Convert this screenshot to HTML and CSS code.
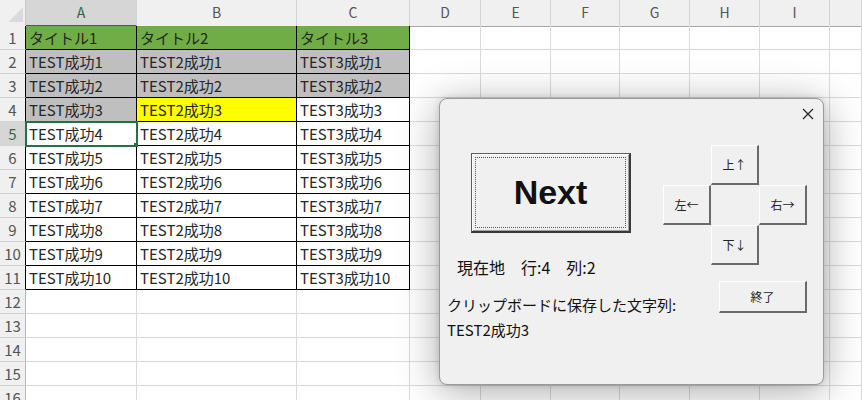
FILE: index.html
```html
<!DOCTYPE html>
<html lang="ja">
<head>
  <meta charset="UTF-8" />
  <title>Sheet1 - カーソル移動</title>
  <link rel="stylesheet" href="styles.css">
</head>
<body>

<div class="sheet">
  <div class="row head">
    <div class="corner"></div>
    <div class="ch sel">A</div><div class="ch">B</div><div class="ch">C</div><div class="ch">D</div><div class="ch">E</div>
    <div class="ch">F</div><div class="ch">G</div><div class="ch">H</div><div class="ch">I</div><div class="ch"></div>
  </div>

  <div class="row">
    <div class="rh edge">1</div>
    <div class="c t green">タイトル1</div><div class="c t green">タイトル2</div><div class="c t green">タイトル3</div>
    <div class="c"></div><div class="c"></div><div class="c"></div><div class="c"></div><div class="c"></div><div class="c"></div><div class="c"></div>
  </div>
  <div class="row">
    <div class="rh edge">2</div>
    <div class="c t gray">TEST成功1</div><div class="c t gray">TEST2成功1</div><div class="c t gray">TEST3成功1</div>
    <div class="c"></div><div class="c"></div><div class="c"></div><div class="c"></div><div class="c"></div><div class="c"></div><div class="c"></div>
  </div>
  <div class="row">
    <div class="rh edge">3</div>
    <div class="c t gray">TEST成功2</div><div class="c t gray">TEST2成功2</div><div class="c t gray">TEST3成功2</div>
    <div class="c"></div><div class="c"></div><div class="c"></div><div class="c"></div><div class="c"></div><div class="c"></div><div class="c"></div>
  </div>
  <div class="row">
    <div class="rh edge">4</div>
    <div class="c t gray">TEST成功3</div><div class="c t yellow">TEST2成功3</div><div class="c t">TEST3成功3</div>
    <div class="c"></div><div class="c"></div><div class="c"></div><div class="c"></div><div class="c"></div><div class="c"></div><div class="c"></div>
  </div>
  <div class="row">
    <div class="rh edge sel">5</div>
    <div class="c t active">TEST成功4</div><div class="c t">TEST2成功4</div><div class="c t">TEST3成功4</div>
    <div class="c"></div><div class="c"></div><div class="c"></div><div class="c"></div><div class="c"></div><div class="c"></div><div class="c"></div>
  </div>
  <div class="row">
    <div class="rh edge">6</div>
    <div class="c t">TEST成功5</div><div class="c t">TEST2成功5</div><div class="c t">TEST3成功5</div>
    <div class="c"></div><div class="c"></div><div class="c"></div><div class="c"></div><div class="c"></div><div class="c"></div><div class="c"></div>
  </div>
  <div class="row">
    <div class="rh edge">7</div>
    <div class="c t">TEST成功6</div><div class="c t">TEST2成功6</div><div class="c t">TEST3成功6</div>
    <div class="c"></div><div class="c"></div><div class="c"></div><div class="c"></div><div class="c"></div><div class="c"></div><div class="c"></div>
  </div>
  <div class="row">
    <div class="rh edge">8</div>
    <div class="c t">TEST成功7</div><div class="c t">TEST2成功7</div><div class="c t">TEST3成功7</div>
    <div class="c"></div><div class="c"></div><div class="c"></div><div class="c"></div><div class="c"></div><div class="c"></div><div class="c"></div>
  </div>
  <div class="row">
    <div class="rh edge">9</div>
    <div class="c t">TEST成功8</div><div class="c t">TEST2成功8</div><div class="c t">TEST3成功8</div>
    <div class="c"></div><div class="c"></div><div class="c"></div><div class="c"></div><div class="c"></div><div class="c"></div><div class="c"></div>
  </div>
  <div class="row">
    <div class="rh edge">10</div>
    <div class="c t">TEST成功9</div><div class="c t">TEST2成功9</div><div class="c t">TEST3成功9</div>
    <div class="c"></div><div class="c"></div><div class="c"></div><div class="c"></div><div class="c"></div><div class="c"></div><div class="c"></div>
  </div>
  <div class="row">
    <div class="rh edge">11</div>
    <div class="c t">TEST成功10</div><div class="c t">TEST2成功10</div><div class="c t">TEST3成功10</div>
    <div class="c"></div><div class="c"></div><div class="c"></div><div class="c"></div><div class="c"></div><div class="c"></div><div class="c"></div>
  </div>
  <div class="row">
    <div class="rh">12</div>
    <div class="c"></div><div class="c"></div><div class="c"></div><div class="c"></div><div class="c"></div><div class="c"></div><div class="c"></div><div class="c"></div><div class="c"></div><div class="c"></div>
  </div>
  <div class="row">
    <div class="rh">13</div>
    <div class="c"></div><div class="c"></div><div class="c"></div><div class="c"></div><div class="c"></div><div class="c"></div><div class="c"></div><div class="c"></div><div class="c"></div><div class="c"></div>
  </div>
  <div class="row">
    <div class="rh">14</div>
    <div class="c"></div><div class="c"></div><div class="c"></div><div class="c"></div><div class="c"></div><div class="c"></div><div class="c"></div><div class="c"></div><div class="c"></div><div class="c"></div>
  </div>
  <div class="row">
    <div class="rh">15</div>
    <div class="c"></div><div class="c"></div><div class="c"></div><div class="c"></div><div class="c"></div><div class="c"></div><div class="c"></div><div class="c"></div><div class="c"></div><div class="c"></div>
  </div>
  <div class="row">
    <div class="rh">16</div>
    <div class="c"></div><div class="c"></div><div class="c"></div><div class="c"></div><div class="c"></div><div class="c"></div><div class="c"></div><div class="c"></div><div class="c"></div><div class="c"></div>
  </div>
</div>

<!-- UserForm -->
<div class="form">
  <div class="form-title">
    <span class="close-btn">
      <svg width="12" height="12" viewBox="0 0 12 12"><path d="M1 1L11 11M11 1L1 11" stroke="#222" stroke-width="1.2" fill="none"/></svg>
    </span>
  </div>
  <div class="form-body">
    <div class="form-left">
      <button class="btn next-btn">Next</button>
      <div class="pos-label">現在地　行:4　列:2</div>
      <div class="clip-label">クリップボードに保存した文字列:<br>TEST2成功3</div>
    </div>
    <div class="form-right">
      <div class="dpad">
        <button class="btn up">上↑</button>
        <button class="btn left">左←</button>
        <button class="btn right">右→</button>
        <button class="btn down">下↓</button>
      </div>
      <button class="btn end-btn">終了</button>
    </div>
  </div>
</div>

</body>
</html>
```

FILE: styles.css
```css
body {
  margin: 0;
  background: #fff;
  font-family: "Noto Sans CJK JP", sans-serif;
  color: #222;
  overflow: hidden;
}
.sheet {
  width: 862px;
}
.row {
  display: grid;
  grid-template-columns: 26px 111px 160px 113px 71px 70px 69px 70px 70px 70px 1fr;
  height: 24px;
}
.row.head {
  height: 26px;
  background: #f0f0f0;
}
.corner {
  border-right: 1px solid #c8c8c8;
  border-bottom: 1px solid #a8a8a8;
  background: linear-gradient(135deg, transparent 55%, #dadada 55%) no-repeat 7px 6px / 16px 16px;
}
.ch {
  border-right: 1px solid #d4d4d4;
  border-bottom: 1px solid #a8a8a8;
  font-size: 14px;
  line-height: 25px;
  text-align: center;
  color: #555;
}
.ch.sel {
  background: #d6d6d6;
  color: #2d6a44;
  border-bottom: 2px solid #217346;
}
.rh {
  background: #f0f0f0;
  border-right: 1px solid #b8b8b8;
  border-bottom: 1px solid #d4d4d4;
  font-size: 15px;
  line-height: 23px;
  text-align: center;
  color: #555;
}
.rh.edge {
  border-right-color: #000;
}
.rh.sel {
  background: #d6d6d6;
  color: #217346;
}
.c {
  border-right: 1px solid #dadada;
  border-bottom: 1px solid #dadada;
}
.c.t {
  border-right-color: #000;
  border-bottom-color: #000;
  font-size: 15px;
  line-height: 23px;
  padding-left: 3px;
  white-space: nowrap;
  overflow: hidden;
  color: #262626;
}
.green { background: #70ad47; }
.gray { background: #bfbfbf; }
.yellow { background: #ffff00; }
.active {
  position: relative;
  outline: 2px solid #217346;
  outline-offset: -1px;
}
.active::after {
  content: "";
  position: absolute;
  right: -4px;
  bottom: -4px;
  width: 5px;
  height: 5px;
  background: #217346;
  border: 1px solid #fff;
}

/* form window */
.form {
  position: absolute;
  left: 439px;
  top: 98px;
  width: 385px;
  height: 287px;
  box-sizing: border-box;
  background: #f0f0f0;
  border: 1px solid #9a9a9a;
  border-radius: 8px;
  box-shadow: 0 6px 40px rgba(0,0,0,0.34), 0 0 6px rgba(0,0,0,0.14);
}
.form-title {
  height: 30px;
  display: flex;
  justify-content: flex-end;
}
.close-btn {
  width: 30px;
  height: 30px;
  display: flex;
  align-items: center;
  justify-content: center;
}
.form-body {
  display: grid;
  grid-template-columns: 223px auto;
}
.form-left {
  display: flex;
  flex-direction: column;
  align-items: flex-start;
}
.btn {
  font-family: "Noto Sans CJK JP", sans-serif;
  background: #f0f0f0;
  color: #222;
  padding: 0;
  box-sizing: border-box;
  border-style: solid;
  border-width: 1px 2px 2px 1px;
  border-color: #fff #6a6a6a #6a6a6a #fff;
  font-size: 12px;
  cursor: pointer;
}
.next-btn {
  position: relative;
  margin: 24px 0 0 31px;
  width: 160px;
  height: 80px;
  border-color: #5c5c5c #3a3a3a #3a3a3a #5c5c5c;
  box-shadow: inset 1px 1px #fff, inset -1px -1px #a0a0a0;
  font-family: "Liberation Sans", Arial, sans-serif;
  font-weight: bold;
  font-size: 34px;
  color: #111;
}
.next-btn::before {
  content: "";
  position: absolute;
  inset: 3px;
  border: 1px dotted #555;
}
.pos-label {
  margin: 24px 0 0 17px;
  font-size: 16px;
  line-height: 20px;
  white-space: pre;
  color: #111;
}
.clip-label {
  margin: 15px 0 0 7px;
  font-size: 15px;
  line-height: 25px;
  white-space: nowrap;
  color: #111;
}
.form-right {
  display: flex;
  flex-direction: column;
  align-items: flex-start;
}
.dpad {
  margin-top: 16px;
  display: grid;
  grid-template-columns: 48px 48px 48px;
  grid-template-rows: 40px 40px 40px;
}
.dpad .up { grid-column: 2; grid-row: 1; }
.dpad .left { grid-column: 1; grid-row: 2; }
.dpad .right { grid-column: 3; grid-row: 2; }
.dpad .down { grid-column: 2; grid-row: 3; }
.end-btn {
  margin: 16px 0 0 56px;
  width: 88px;
  height: 32px;
}
```
